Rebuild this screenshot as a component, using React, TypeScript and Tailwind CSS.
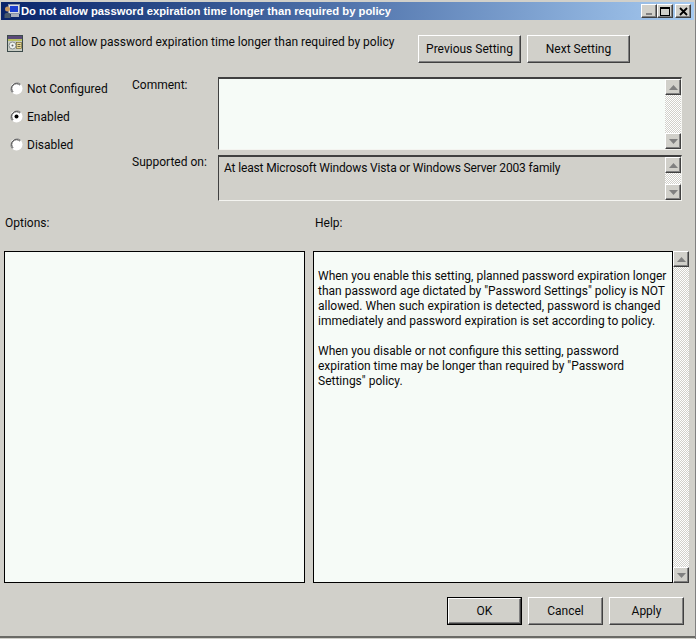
import React from "react";

const raised = "border border-t-white border-l-white border-r-[#404040] border-b-[#404040] shadow-[inset_-1px_-1px_0_#808080]";

function Btn({ w, label, def }: { w: string; label: string; def?: boolean }) {
  return (
    <div className={def ? `${w} h-[28px] border border-black` : `${w} h-[28px]`}>
      <div className={`w-full h-full flex items-center justify-center bg-[#d1d0ca] text-[12px] ${raised}`}>{label}</div>
    </div>
  );
}

function Radio({ label, on }: { label: string; on?: boolean }) {
  return (
    <div className="flex items-center h-[28px]">
      <svg width="13" height="13" viewBox="0 0 13 13" className="shrink-0 -mt-[1px]">
        <circle cx="6.5" cy="6.5" r="6" fill="#ffffff" />
        <path d="M2.3 10.7A6 6 0 0 1 10.7 2.3" fill="none" stroke="#808080" />
        <path d="M3.1 9.9A4.8 4.8 0 0 1 9.9 3.1" fill="none" stroke="#404040" />
        {on && <circle cx="6.5" cy="6.5" r="2" fill="#000" />}
      </svg>
      <span className="ml-[4px]">{label}</span>
    </div>
  );
}

function Arrow({ up }: { up?: boolean }) {
  return (
    <div className={`w-[16px] h-[16px] shrink-0 flex items-center justify-center bg-[#d1d0ca] ${raised}`}>
      <svg width="9" height="5" viewBox="0 0 9 5">
        <path d={up ? "M4.5 0 9 5H0Z" : "M0 0H9L4.5 5Z"} fill="#808080" />
      </svg>
    </div>
  );
}

function ScrollBar() {
  return (
    <div className="w-[16px] self-stretch flex flex-col justify-between bg-[repeating-conic-gradient(#d1d0ca_0_25%,#ffffff_0_50%)] bg-[length:2px_2px]">
      <Arrow up />
      <Arrow />
    </div>
  );
}

function Sunken({ className, children, bg }: { className: string; children?: React.ReactNode; bg: string }) {
  return (
    <div className={`flex border border-t-[#404040] border-l-[#404040] border-r-[#f4f4f0] border-b-[#f4f4f0] border-t-2 ${bg} ${className}`}>
      <div className="flex-1 min-w-0 pl-[5px] pt-[4px] tracking-[-0.15px]">{children}</div>
      <ScrollBar />
    </div>
  );
}

function WinBtn({ children, className = "" }: { children: React.ReactNode; className?: string }) {
  return (
    <div className={`w-[16px] h-[14px] flex items-center justify-center bg-[#d1d0ca] ${raised} ${className}`}>
      {children}
    </div>
  );
}

export default function App() {
  return (
    <div
      className="relative w-[696px] h-[639px] overflow-hidden bg-[#d1d0ca] text-[#0a0a0a] text-[12px] leading-[15px] border-r border-r-[#808080]"
      style={{ fontFamily: "Roboto, sans-serif" }}
    >
      <div className="h-[638px] border-b-2 border-b-[#6a6a66] flex flex-col">
        {/* Title bar */}
        <div className="mt-[2px] ml-[1px] mr-[1px] h-[18px] flex items-center bg-gradient-to-r from-[#0a246a] to-[#a6caf0] text-white pl-[3px] pr-[3px]">
          <svg width="16" height="16" viewBox="0 0 16 16" className="shrink-0">
            <rect x="4.5" y="1.5" width="11" height="9" fill="#d8dce4" stroke="#8a94a8" />
            <rect x="6" y="3" width="8" height="6" fill="#1c3fd0" />
            <rect x="7" y="11" width="8" height="3" fill="#aab0bc" />
            <circle cx="3.5" cy="6" r="2.5" fill="#c89860" />
            <path d="M0.5 15V12c0-3 6-3 6 0v3Z" fill="#4a5a6a" />
          </svg>
          <span className="ml-[1px] font-bold whitespace-nowrap text-[11.25px]" style={{ fontFamily: '"Liberation Sans", sans-serif' }}>
            Do not allow password expiration time longer than required by policy
          </span>
          <div className="ml-auto flex">
            <WinBtn>
              <div className="w-[6px] h-[2px] bg-[#808080] mt-[6px] mr-[1px]" />
            </WinBtn>
            <WinBtn className="mr-[2px]">
              <div className="w-[10px] h-[9px] border border-black border-t-2" />
            </WinBtn>
            <WinBtn>
              <svg width="9" height="9" viewBox="0 0 9 9">
                <path d="M1 1 8 8M8 1 1 8" stroke="#000" strokeWidth="1.8" />
              </svg>
            </WinBtn>
          </div>
        </div>

        {/* Header row */}
        <div className="flex items-start mt-[15px] pl-[7px]">
          <svg width="16" height="17" viewBox="0 0 16 17" className="shrink-0">
            <rect x="0.5" y="0.5" width="15" height="16" fill="#c8ccc4" stroke="#3c4a4a" />
            <rect x="1" y="1" width="14" height="3" fill="#5a4a78" />
            <rect x="1" y="4" width="14" height="2" fill="#b8c060" />
            <circle cx="5.5" cy="10.5" r="3.5" fill="#f0f4f0" stroke="#8a9090" />
            <circle cx="5.5" cy="10.5" r="1" fill="#606060" />
            <rect x="9.5" y="7.5" width="5" height="6" fill="#e8d890" stroke="#6a5a20" strokeWidth="0.6" />
            <path d="M10.5 9.5h3M10.5 11.5h3" stroke="#333" strokeWidth="0.7" />
          </svg>
          <span className="ml-[8px] whitespace-nowrap w-[387px]">Do not allow password expiration time longer than required by policy</span>
          <div className="flex gap-[6px]">
            <Btn w="w-[103px]" label="Previous Setting" />
            <Btn w="w-[103px]" label="Next Setting" />
          </div>
        </div>

        {/* State and comment */}
        <div className="flex mt-[14px] pl-[10px]">
          <div className="w-[122px] -mt-[2px]">
            <Radio label="Not Configured" />
            <Radio label="Enabled" on />
            <Radio label="Disabled" />
          </div>
          <div className="flex flex-col">
            <div className="flex">
              <div className="w-[86px] mt-[1px]">Comment:</div>
              <Sunken className="w-[464px] h-[73px]" bg="bg-[#f6fbf7]" />
            </div>
            <div className="flex mt-[5px]">
              <div className="w-[86px]">Supported on:</div>
              <Sunken className="w-[464px] h-[46px]" bg="bg-[#d1d0ca]">At least Microsoft Windows Vista or Windows Server 2003 family</Sunken>
            </div>
          </div>
        </div>

        {/* Labels */}
        <div className="flex mt-[15px] pl-[5px]">
          <div className="w-[310px]">Options:</div>
          <div>Help:</div>
        </div>

        {/* Panels */}
        <div className="flex mt-[20px] pl-[4px]">
          <div className="w-[301px] h-[332px] border border-black bg-[#f6fbf7]" />
          <div className="flex ml-[8px]">
            <div className="w-[360px] h-[332px] border border-black bg-[#f6fbf7] pl-[4px] pt-[17px] whitespace-nowrap">
              When you enable this setting, planned password expiration longer<br />
              than password age dictated by "Password Settings" policy is NOT<br />
              allowed. When such expiration is detected, password is changed<br />
              immediately and password expiration is set according to policy.<br />
              <br />
              When you disable or not configure this setting, password<br />
              expiration time may be longer than required by "Password<br />
              Settings" policy.
            </div>
            <ScrollBar />
          </div>
        </div>

        {/* Footer */}
        <div className="flex justify-end gap-[6px] mt-[14px] pr-[11px]">
          <Btn w="w-[75px]" label="OK" def />
          <Btn w="w-[75px]" label="Cancel" />
          <Btn w="w-[75px]" label="Apply" />
        </div>
      </div>
    </div>
  );
}
